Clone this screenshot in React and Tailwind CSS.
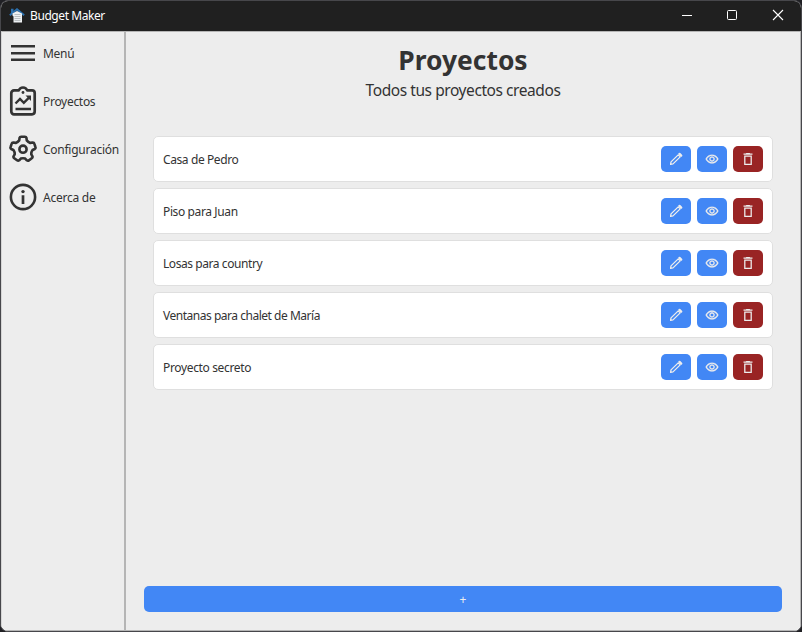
import React from "react";

const projects = [
  { name: "Casa de Pedro", tracking: "tracking-[-0.4px]" },
  { name: "Piso para Juan", tracking: "tracking-[-0.38px]" },
  { name: "Losas para country", tracking: "tracking-[-0.43px]" },
  { name: "Ventanas para chalet de María", tracking: "tracking-[-0.48px]" },
  { name: "Proyecto secreto", tracking: "tracking-[-0.35px]" },
];

function Logo() {
  return (
    <svg className="h-4 w-4" viewBox="0 0 16 16" fill="none">
      <path d="M.8 7.300 8 1.200l7.200 6.100" stroke="#2c70ad" strokeWidth="1.900" />
      <path d="M2 .800h2.500v3L2 6z" fill="#2c70ad" />
      <path d="M3.500 5.500 8 3l5 2.500v9H4.500V8.500l-1-1z" fill="#edf0f2" />
      <path d="M5.500 6.500h6M5.500 8.500h6M5.500 10.500h6M5.500 12.500h6" stroke="#a3a9ae" strokeWidth=".7" />
    </svg>
  );
}

function MenuIcon() {
  return (
    <svg className="h-7 w-7" viewBox="0 0 28 28" fill="#333">
      <path d="M2 6h24v2.500H2zM2 13h24v2.500H2zM2 19.500h24V22H2z" />
    </svg>
  );
}

function ProjectsIcon() {
  return (
    <svg className="h-[30px] w-7" viewBox="0 0 28 30" fill="none" stroke="#333" strokeWidth="2.700">
      <path d="M9.800 4.400H5a2.700 2.700 0 0 0-2.700 2.700v18.500A2.700 2.700 0 0 0 5 28.300h18a2.700 2.700 0 0 0 2.700-2.700V7.100A2.700 2.700 0 0 0 23 4.400h-4.800c-.7-1.900-2.200-2.900-4.200-2.900s-3.500 1-4.200 2.900z" strokeLinejoin="round" />
      <circle cx="14" cy="6.500" r="1.400" fill="#333" stroke="none" />
      <path d="M6.500 17.500 11 13l3.800 3.800 5.200-5.200M6.500 23h15.500" strokeWidth="2.400" />
      <path d="M16.500 9.500h5.500V15z" fill="#333" stroke="none" />
    </svg>
  );
}

// Five-toothed gear outline: each tooth has two outer corners, with a rounded valley between teeth.
const polar = (radius, degrees) => {
  const a = (degrees * Math.PI) / 180;
  return `${(14 + radius * Math.cos(a)).toFixed(2)} ${(14.2 + radius * Math.sin(a)).toFixed(2)}`;
};
const gearPath =
  [0, 1, 2, 3, 4]
    .map((i) => {
      const c = -90 + i * 72;
      return `${i === 0 ? "M" : "L"}${polar(9.6, c - 23)}L${polar(11.8, c - 17)}Q${polar(12.9, c - 14)} ${polar(12.6, c - 8)}L${polar(12.6, c + 8)}Q${polar(12.9, c + 14)} ${polar(11.8, c + 17)}L${polar(9.6, c + 23)}Q${polar(8.7, c + 36)} ${polar(9.6, c + 49)}`;
    })
    .join("") + "Z";

function GearIcon() {
  return (
    <svg className="h-7 w-7" viewBox="0 0 28 28" fill="none" stroke="#333" strokeWidth="2.600" strokeLinejoin="round">
      <path d={gearPath} />
      <circle cx="14" cy="14.200" r="3.600" />
    </svg>
  );
}

function InfoIcon() {
  return (
    <svg className="h-7 w-7" viewBox="0 0 28 28" fill="none" stroke="#333">
      <circle cx="14" cy="14" r="12.100" strokeWidth="2.600" />
      <path d="M14 12.300v8.700" strokeWidth="2.700" />
      <circle cx="14" cy="8.600" r="1.700" fill="#333" stroke="none" />
    </svg>
  );
}

const actionPaths = {
  view: "M480-320q75 0 127.500-52.500T660-500q0-75-52.500-127.500T480-680q-75 0-127.500 52.500T300-500q0 75 52.500 127.500T480-320Zm0-72q-45 0-76.500-31.500T372-500q0-45 31.500-76.500T480-608q45 0 76.500 31.500T588-500q0 45-31.500 76.500T480-392Zm0 192q-146 0-266-81.500T40-500q54-137 174-218.500T480-800q146 0 266 81.500T920-500q-54 137-174 218.500T480-200Zm0-80q113 0 207.500-59.500T832-500q-50-101-144.500-160.500T480-720q-113 0-207.500 59.500T128-500q50 101 144.500 160.500T480-280Z",
  remove: "M240-120v-600h480v600H240Zm80-80h320v-440H320v440ZM200-760v-80h140l40-40h200l40 40h140v80H200Z",
};

function ActionIcon({ kind }) {
  if (kind === "edit") {
    return (
      <svg className="h-3.5 w-3.5" viewBox="0 0 14 14" fill="none" stroke="#ededed" strokeWidth="1.300">
        <path d="M1.600 12.400 2 9.900 9.200 2.900l2 2-7.200 7z" strokeLinejoin="round" />
        <path d="m10.500 1.900 1.700 1.700" strokeWidth="2.300" strokeLinecap="round" />
      </svg>
    );
  }
  return (
    <svg
      className={kind === "view" ? "h-3.5 w-3.5" : "h-4 w-4"}
      viewBox={kind === "view" ? "0 -980 960 960" : "-20 -1000 1000 1000"}
      fill="#ededed"
      stroke="#ededed"
      strokeWidth={kind === "view" ? 18 : 0}
    >
      <path d={actionPaths[kind]} />
    </svg>
  );
}

function Action({ kind, label }) {
  return (
    <button
      aria-label={label}
      className={`flex h-[26px] w-[30px] items-center justify-center rounded-[5px] ${kind === "remove" ? "bg-[#992424]" : "bg-[#4287f5]"}`}
    >
      <ActionIcon kind={kind} />
    </button>
  );
}

const menu = [
  { Icon: MenuIcon, text: "Menú", tracking: "tracking-[-0.3px]" },
  { Icon: ProjectsIcon, text: "Proyectos", tracking: "tracking-[-0.3px]" },
  { Icon: GearIcon, text: "Configuración", tracking: "tracking-[-0.26px]" },
  { Icon: InfoIcon, text: "Acerca de", tracking: "tracking-[-0.25px]" },
];

export default function App() {
  return (
    <div className="h-[632px] w-[802px] bg-[#202024] font-['Noto_Sans',sans-serif] text-[#333]">
      <div className="flex h-full w-full flex-col overflow-hidden rounded-lg border border-[#47474b] bg-[#ededed]">
        <header className="flex h-[30px] shrink-0 items-center bg-[#202020] pl-2 text-white">
          <Logo />
          <span className="ml-[5px] text-[12px] leading-4 tracking-[-0.42px]">Budget Maker</span>
          <div className="ml-auto flex items-center">
            <svg className="h-[30px] w-[120px]" viewBox="0 0 120 30" fill="none" stroke="#fff">
              <path d="M1 14.500h10" />
              <rect x="46.500" y="9.500" width="9" height="9" rx="1" />
              <path d="m92 9 10 10m0-10L92 19" strokeWidth="1.100" />
            </svg>
          </div>
        </header>
        <div className="flex min-h-0 flex-1 border border-[#b5b5b5] border-l-[#d5d5d5]">
          <nav className="flex w-[124px] shrink-0 flex-col border-r-2 border-[#b5b5b5] pl-[7px]">
            {menu.map(({ Icon, text, tracking }, i) => (
              <a key={text} className={`flex shrink-0 items-center gap-[6px] ${i === 0 ? "mb-[3px] h-[42px]" : "h-12"}`}>
                <Icon />
                <span className={`whitespace-nowrap pt-[2px] text-[12px] leading-4 ${tracking}`}>{text}</span>
              </a>
            ))}
          </nav>
          <main className="flex min-w-0 flex-1 flex-col px-[18px] pb-[18px]">
            <h1 className="mt-[9px] text-center text-[26.4px] font-bold leading-[38px]">Proyectos</h1>
            <p className="text-center text-[15.5px] leading-[22px] tracking-[-0.43px]">Todos tus proyectos creados</p>
            <ul className="mx-[9px] mt-[35px] flex flex-col gap-[6px]">
              {projects.map(({ name, tracking }) => (
                <li key={name} className="flex h-[46px] items-center rounded-[5px] border border-[#dfdfdf] bg-white px-[9px]">
                  <span className={`flex-1 pt-[2px] text-[12px] leading-4 ${tracking}`}>{name}</span>
                  <div className="flex gap-[6px]">
                    <Action kind="edit" label="Editar" />
                    <Action kind="view" label="Ver" />
                    <Action kind="remove" label="Eliminar" />
                  </div>
                </li>
              ))}
            </ul>
            <button className="mt-auto h-[26px] shrink-0 rounded-[5px] bg-[#4287f5] pt-[2px] text-[12px] leading-4 text-[#ededed]">+</button>
          </main>
        </div>
      </div>
    </div>
  );
}
